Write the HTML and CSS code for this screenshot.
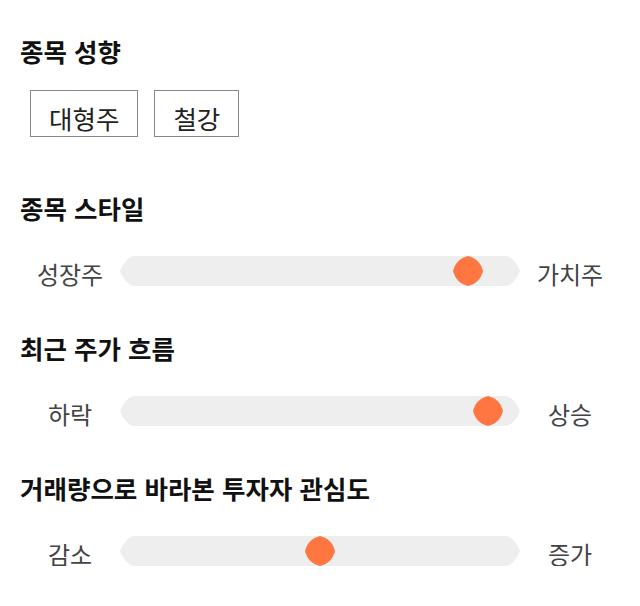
FILE: index.html
```html
<!DOCTYPE html>
<html lang="ko">

<head>
    <meta charset="UTF-8">
    <meta name="viewport" content="width=device-width, initial-scale=1.0">
    <title>종목 분석</title>
    <link rel="stylesheet" href="styles.css">
</head>

<body>
    <div class="report">
        <section class="block">
            <h2>종목 성향</h2>
            <div class="tags">
                <span class="tag">대형주</span>
                <span class="tag">철강</span>
            </div>
        </section>

        <section class="block">
            <h2>종목 스타일</h2>
            <div class="slider">
                <span class="label">성장주</span>
                <div class="track">
                    <svg class="cap" width="15" height="30" viewBox="0 0 15 30"><path d="M15 0C8 0 3 8 0 15C3 22 8 30 15 30Z"/></svg>
                    <div class="bar"></div>
                    <svg class="cap" width="15" height="30" viewBox="0 0 15 30"><path d="M0 0C7 0 12 8 15 15C12 22 7 30 0 30Z"/></svg>
                    <svg class="thumb" style="left: calc(87% - 15px)" width="30" height="30" viewBox="0 0 30 30"><path d="M15 0C23 2 28 7 30 15C28 23 23 28 15 30C7 28 2 23 0 15C2 7 7 2 15 0Z"/></svg>
                </div>
                <span class="label">가치주</span>
            </div>
        </section>

        <section class="block">
            <h2>최근 주가 흐름</h2>
            <div class="slider">
                <span class="label">하락</span>
                <div class="track">
                    <svg class="cap" width="15" height="30" viewBox="0 0 15 30"><path d="M15 0C8 0 3 8 0 15C3 22 8 30 15 30Z"/></svg>
                    <div class="bar"></div>
                    <svg class="cap" width="15" height="30" viewBox="0 0 15 30"><path d="M0 0C7 0 12 8 15 15C12 22 7 30 0 30Z"/></svg>
                    <svg class="thumb" style="left: calc(92% - 15px)" width="30" height="30" viewBox="0 0 30 30"><path d="M15 0C23 2 28 7 30 15C28 23 23 28 15 30C7 28 2 23 0 15C2 7 7 2 15 0Z"/></svg>
                </div>
                <span class="label">상승</span>
            </div>
        </section>

        <section class="block">
            <h2>거래량으로 바라본 투자자 관심도</h2>
            <div class="slider">
                <span class="label">감소</span>
                <div class="track">
                    <svg class="cap" width="15" height="30" viewBox="0 0 15 30"><path d="M15 0C8 0 3 8 0 15C3 22 8 30 15 30Z"/></svg>
                    <div class="bar"></div>
                    <svg class="cap" width="15" height="30" viewBox="0 0 15 30"><path d="M0 0C7 0 12 8 15 15C12 22 7 30 0 30Z"/></svg>
                    <svg class="thumb" style="left: calc(50% - 15px)" width="30" height="30" viewBox="0 0 30 30"><path d="M15 0C23 2 28 7 30 15C28 23 23 28 15 30C7 28 2 23 0 15C2 7 7 2 15 0Z"/></svg>
                </div>
                <span class="label">증가</span>
            </div>
        </section>
    </div>
</body>

</html>
```

FILE: styles.css
```css
body {
    margin: 0;
    background: #fff;
    font-family: "Noto Sans CJK KR", "Noto Sans", sans-serif;
    color: #111;
}

.report {
    padding: 34px 20px 0 20px;
    display: flex;
    flex-direction: column;
    gap: 45px;
}

.block h2 {
    margin: 0;
    font-size: 25.5px;
    line-height: 34px;
    font-weight: 700;
    color: #111;
}

/* 종목 성향 태그 */
.tags {
    display: flex;
    gap: 16px;
    margin: 22px 0 9px 10px;
}

.tag {
    border: 1px solid #888;
    padding: 10px 18px 2px 18px;
    font-size: 25.5px;
    line-height: 33px;
    color: #222;
}

/* 슬라이더 */
.slider {
    display: flex;
    align-items: center;
    margin-top: 31px;
}

.label {
    width: 100px;
    margin: 3px 0 -3px 0;
    text-align: center;
    font-size: 24px;
    line-height: 30px;
    color: #444;
}

.track {
    flex: 1;
    display: flex;
    height: 30px;
    position: relative;
}

.cap {
    display: block;
    flex: none;
    fill: #eeeeee;
}

.bar {
    flex: 1;
    background: #eeeeee;
}

.thumb {
    position: absolute;
    top: 0;
    fill: #ff7640;
}
```
